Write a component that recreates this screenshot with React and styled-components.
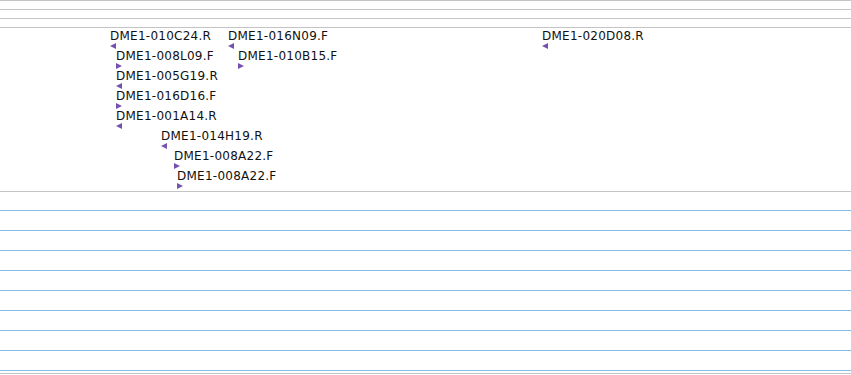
import React from 'react'
import styled, { createGlobalStyle } from 'styled-components'

const GlobalStyle = createGlobalStyle`
  html, body {
    margin: 0;
    padding: 0;
    background: #fff;
  }
  body {
    font-family: 'DejaVu Sans', 'Liberation Sans', sans-serif;
  }
`

const Browser = styled.div`
  width: 851px;
  height: 375px;
  overflow: hidden;
  background: #fff;
`

const Ruler = styled.div`
  border-top: 1px solid #c4c4c4;
`

const RulerRow = styled.div`
  height: 8px;
  border-bottom: 1px solid #c4c4c4;
`

const Track = styled.div`
  position: relative;
  height: 163px;
  border-bottom: 1px solid #c4c4c4;
`

const Feature = styled.div`
  position: absolute;
  display: flex;
  flex-direction: column;
  align-items: flex-start;
`

const Label = styled.span`
  padding-top: 1px;
  font-size: 12px;
  line-height: 14px;
  letter-spacing: 0.25px;
  color: #111;
  white-space: nowrap;
`

const Marker = styled.span`
  width: 0;
  height: 0;
  border-top: 3px solid transparent;
  border-bottom: 3px solid transparent;
  ${p => p.$dir === 'left'
    ? 'border-right: 6px solid #7652b0;'
    : 'border-left: 6px solid #7652b0;'}
`

const Lanes = styled.div`
  padding-top: 18px;
`

const Lane = styled.div`
  height: 19px;
  border-top: 1px solid #86bde6;
`

const LaneEnd = styled.div`
  height: 2px;
  border-top: 1px solid #86bde6;
  border-bottom: 1px solid #c4c4c4;
`

const features = [
  { name: 'DME1-010C24.R', x: 110, row: 0, dir: 'left' },
  { name: 'DME1-008L09.F', x: 116, row: 1, dir: 'right' },
  { name: 'DME1-005G19.R', x: 116, row: 2, dir: 'left' },
  { name: 'DME1-016D16.F', x: 116, row: 3, dir: 'right' },
  { name: 'DME1-001A14.R', x: 116, row: 4, dir: 'left' },
  { name: 'DME1-014H19.R', x: 161, row: 5, dir: 'left' },
  { name: 'DME1-008A22.F', x: 174, row: 6, dir: 'right' },
  { name: 'DME1-008A22.F', x: 177, row: 7, dir: 'right' },
  { name: 'DME1-016N09.F', x: 228, row: 0, dir: 'left' },
  { name: 'DME1-010B15.F', x: 238, row: 1, dir: 'right' },
  { name: 'DME1-020D08.R', x: 542, row: 0, dir: 'left' },
]

const App = () => {
  return (
    <Browser>
      <GlobalStyle />
      <Ruler>
        <RulerRow />
        <RulerRow />
        <RulerRow />
      </Ruler>
      <Track>
        {features.map((f, i) => (
          <Feature key={i} style={{ left: f.x, top: f.row * 20 }}>
            <Label>{f.name}</Label>
            <Marker $dir={f.dir} />
          </Feature>
        ))}
      </Track>
      <Lanes>
        {Array.from({ length: 8 }).map((_, i) => <Lane key={i} />)}
        <LaneEnd />
      </Lanes>
    </Browser>
  )
}

export default App
